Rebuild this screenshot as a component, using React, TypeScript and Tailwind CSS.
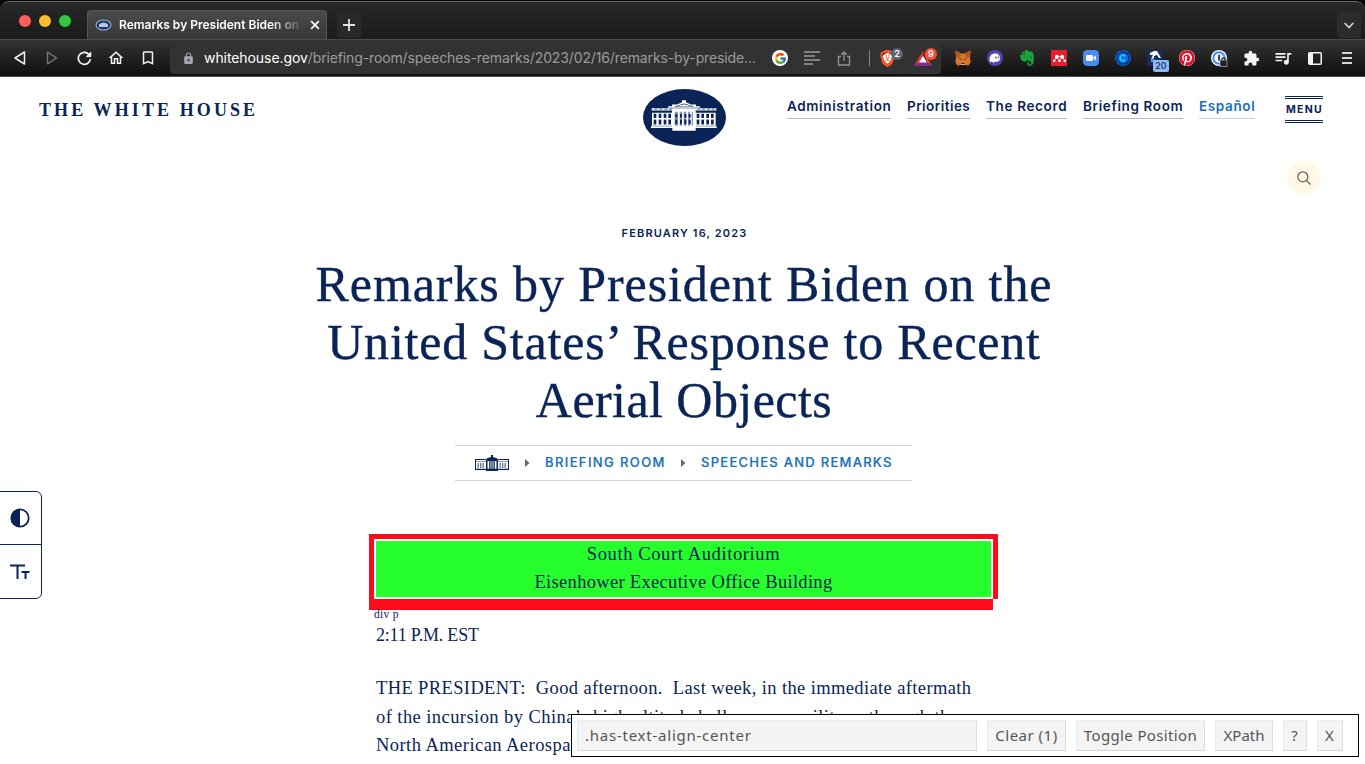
import React from "react";
import { FcGoogle } from "react-icons/fc";
import { SiBrave, SiEvernote, SiMendeley } from "react-icons/si";
import { FaPinterest } from "react-icons/fa";
import { MdExtension, MdQueueMusic, MdOutlineHome, MdBookmarkBorder, MdLock } from "react-icons/md";

function Building({ fg, bg, mid, className }: { fg: string; bg: string; mid: string; className: string }) {
  return (
    <svg viewBox="94 56 198 95" preserveAspectRatio="none" className={className} fill={fg}>
      <path d="M96 81h194v7H96z" />
      <path d="M145 80v-5h12v-5h15l15-7v-6h12v6l15 7h15v5h12v5z" />
      <path d="M163 77l31-10 31 10z" fill={bg} />
      <path d="M170 76l24-7 24 7z" />
      <path d="M97 95h191v40H97z" />
      {[102, 117, 132, 146, 231, 245, 260, 274].map((x) => (
        <g key={x} fill={bg}>
          <rect x={x} y="98" width="8" height="13" />
          <rect x={x} y="116" width="8" height="15" />
          <rect x={x + 2} y="83" width="9" height="2" />
        </g>
      ))}
      <path d="M157 86h71v53h-71z" />
      <path d="M165 92h55v46h-55z" fill={mid} />
      {[177, 189, 202, 213].map((x) => (
        <rect key={x} x={x - 2} y="90" width="5" height="50" />
      ))}
      {[167, 181, 194, 207].map((x) => (
        <g key={x} fill={bg}>
          <rect x={x} y="99" width="6" height="11" />
          <rect x={x} y="116" width="6" height="14" />
        </g>
      ))}
      <path d="M94 135h197v7H94zM158 140h70v10h-70z" />
      <path d="M96 138h60v1H96zM230 138h60v1h-60z" fill={bg} />
    </svg>
  );
}

function SmallBuilding() {
  return (
    <svg width="34" height="16" viewBox="0 0 34 16" fill="#0a2458">
      <path d="M0 4h11v1H0zM23 4h11v1H23zM0 4h1v11H0zM33 4h1v11h-1z" />
      <path d="M0 13.800h34V15H0zM11 14h12v2H11z" />
      <path d="M0 6.200h11v.8H0zM23 6.200h11v.8H23z" opacity=".6" />
      <path d="M11 5l1-1.700 4-1.300V0h2v2l4 1.300L23 5v10h-1.500V6h-9v9H11z" />
      <path d="M12 4h10v2H12z" />
      <path d="M14.200 6h1.300v9h-1.300zM16.400 6h1.200v9h-1.200zM18.500 6h1.300v9h-1.300z" />
      {[2.5, 5, 7.5, 24.5, 27, 29.5].map((x) => (
        <rect key={x} x={x} y="8" width="1.400" height="5" opacity=".6" />
      ))}
    </svg>
  );
}

function Cell({ children, className = "" }: { children: React.ReactNode; className?: string }) {
  return <div className={"relative flex h-8 w-8 shrink-0 items-center justify-center " + className}>{children}</div>;
}

function TabStrip() {
  return (
    <div className="h-[39px] bg-[#05050a] pt-px">
      <div className="flex h-[38px] items-end rounded-t-[9px] border-t border-[#68686a] bg-linear-to-b from-[#282828] to-[#1b1b1b] pl-[19px]">
        <div className="mb-[12px] flex gap-2">
          <span className="h-3 w-3 rounded-full bg-[#ff5f57]" />
          <span className="h-3 w-3 rounded-full bg-[#febc2e]" />
          <span className="h-3 w-3 rounded-full bg-[#30c840]" />
        </div>
        <div className="ml-[16px] flex h-[29px] w-[240px] items-center rounded-t border border-b-0 border-[#565656] bg-linear-to-b from-[#4b4b4b] to-[#373737] pl-[7px]">
          <svg width="17" height="12" viewBox="0 0 17 12">
            <ellipse cx="8.5" cy="6" rx="8" ry="5.5" fill="#a9b9d6" />
            <ellipse cx="8.5" cy="6" rx="7" ry="4.6" fill="#173a76" />
            <path d="M4 5l4.500-1.500L13 5v3H4z" fill="#b9c6dd" />
          </svg>
          <div className="ml-[7px] w-[181px] overflow-hidden font-['Inter',sans-serif] text-[12px] leading-[18px] font-semibold whitespace-nowrap text-white [mask-image:linear-gradient(to_right,black_150px,transparent_186px)]">
            Remarks by President Biden on
          </div>
          <svg width="10" height="10" viewBox="0 0 10 10" className="ml-[10px]" stroke="#fff" strokeWidth="1.700"><path d="M1.200 1.200l7.600 7.600M8.800 1.200L1.200 8.800" /></svg>
        </div>
        <div className="mb-px ml-[10px] flex h-[26px] w-[24px] items-center justify-center rounded bg-[#292929]">
          <svg width="12" height="12" viewBox="0 0 12 12" stroke="#e2e2e2" strokeWidth="1.800"><path d="M6 0v12M0 6h12" /></svg>
        </div>
        <div className="mr-[4px] mb-px ml-auto flex h-[26px] w-[24px] items-center justify-center rounded bg-[#2c2c2c]">
          <svg width="10" height="7" viewBox="0 0 10 7" fill="none" stroke="#d5d5d5" strokeWidth="1.700"><path d="M.7 1L5 5.500 9.300 1" /></svg>
        </div>
      </div>
    </div>
  );
}

function Toolbar() {
  return (
    <div className="flex h-[38px] items-center border-t border-b border-t-[#4c4c4c] border-b-[#504e4c] bg-linear-to-b from-[#343434] to-[#101010] pl-1">
      <Cell><svg width="12" height="14" viewBox="0 0 12 14" fill="none" stroke="#f2f2f2" strokeWidth="1.500" strokeLinejoin="round"><path d="M10.500 1v12L1 7z" /></svg></Cell>
      <Cell><svg width="12" height="14" viewBox="0 0 12 14" fill="none" stroke="#777" strokeWidth="1.400" strokeLinejoin="round"><path d="M1.500 1.200v11.600L10.500 7z" /></svg></Cell>
      <Cell><svg width="15" height="15" viewBox="0 0 15 15" fill="none" stroke="#f5f5f5" strokeWidth="1.700"><path d="M11.700 3.300A6 6 0 1 0 13.300 8" /><path d="M9.500 5.700L13.800 1v4.700z" fill="#f5f5f5" strokeWidth="1" /></svg></Cell>
      <Cell><MdOutlineHome size={18} color="#f2f2f2" /></Cell>
      <Cell><MdBookmarkBorder size={18} color="#f2f2f2" /></Cell>
      <div className="ml-[6px] flex h-[31px] w-[771px] items-center rounded-[4px] bg-[#323232] pl-[12px]">
        <MdLock size={13} color="#a4a6ad" />
        <div className="mb-[2px] ml-[9px] w-[560px] font-['Inter',sans-serif] text-[14px] whitespace-nowrap text-[#9b9b9b]">
          <span className="tracking-[-0.076px] text-white">whitehouse.gov</span>
          <span className="tracking-[-0.131px]">/briefing-room/speeches-remarks/2023/02/16/remarks-by-preside...</span>
        </div>
        <Cell>
          <span className="flex h-4 w-4 items-center justify-center rounded-full bg-white"><FcGoogle size={13} /></span>
        </Cell>
        <Cell><svg width="16" height="14" viewBox="0 0 16 14" stroke="#9a9a9a" strokeWidth="1.500"><path d="M0 1h16M0 5h11M0 9h16M0 13h9" /></svg></Cell>
        <Cell><svg width="14" height="15" viewBox="0 0 14 15" fill="none" stroke="#929292" strokeWidth="1.300"><path d="M4 5.500H1.500v8.500h11V5.500H10M7 10V1.300M4.200 3.800L7 1l2.800 2.800" /></svg></Cell>
        <span className="ml-[9px] h-4 w-px bg-[#858585]" />
        <Cell className="ml-[3px]">
          <span className="mr-[3px] flex h-[17px] w-[17px] items-center justify-center bg-[radial-gradient(circle,white_5px,transparent_5.5px)]"><SiBrave size={17} color="#fb542b" /></span>
          <span className="absolute top-[6px] left-[18px] flex h-3 w-3 items-center justify-center rounded-full bg-[#5d6472] font-['Inter',sans-serif] text-[9px] font-semibold text-white">2</span>
        </Cell>
        <Cell className="ml-[2px]">
          <svg width="18" height="15" viewBox="0 0 18 15"><path d="M9 0L0 15l9-4.500z" fill="#e8343e" /><path d="M9 0l9 15-5-4z" fill="#ff4724" /><path d="M0 15h18l-5-4H5z" fill="#7b2f91" /><path d="M9 5l4 6.500H5z" fill="#fff" /></svg>
          <span className="absolute top-[6px] left-[18px] flex h-3 w-3 items-center justify-center rounded-full bg-[#ff4b37] font-['Inter',sans-serif] text-[9px] font-semibold text-white">9</span>
        </Cell>
      </div>
      <Cell className="ml-[6px]">
        <svg width="16" height="16" viewBox="0 0 16 16"><path d="M.5.5L6 3.500h4L15.500.5 15 8l.7 4-2 3.500L10 15H6l-3.700.5-2-3.500L1 8z" fill="#d9752b" /><path d="M.5.5L6 3.500 5 8 1 7zM15.500.5L10 3.500l1 4.500 4-1z" fill="#b8581d" /><path d="M3.500 8.500L6.500 8.800 6.800 10zM12.500 8.500l-3 .3L9.200 10z" fill="#33251f" /><path d="M6 15l.5-1.800h3L10 15z" fill="#c6b6a6" /><path d="M6.500 13h3v1h-3z" fill="#27201d" /></svg>
      </Cell>
      <Cell>
        <svg width="16" height="16" viewBox="0 0 16 16"><circle cx="8" cy="8" r="8" fill="#5144b8" /><path d="M2.500 10C2.500 5.500 5 3.500 8 3.500s5 2 5 4.700c0 2-.8 2.800-1.800 2.800-.8 1.200-2 1.200-2.800.3-1 1.700-2.900 1.500-3.400.3-1 .9-2.500.4-2.500-1.600z" fill="#fff" /><path d="M8.200 6.500h1.200v2H8.200zM10.600 6.500h1.200v2h-1.200z" fill="#5144b8" /></svg>
      </Cell>
      <Cell><SiEvernote size={16} color="#19a33a" /></Cell>
      <Cell><span className="flex h-4 w-4 items-center justify-center bg-[#e81f31]"><SiMendeley size={13} color="#fff" /></span></Cell>
      <Cell><svg width="16" height="16" viewBox="0 0 16 16"><rect width="16" height="16" rx="4.500" fill="#4a8cf6" /><rect x="3" y="5" width="7" height="6" rx="1.300" fill="#fff" /><path d="M10.500 7.300L13 5.500v5l-2.500-1.800z" fill="#fff" /></svg></Cell>
      <Cell><svg width="16" height="16" viewBox="0 0 16 16" fill="none"><circle cx="8" cy="8" r="7.200" fill="#0b1930" stroke="#0966e4" strokeWidth="1.500" strokeDasharray="6 .6" /><circle cx="8" cy="8" r="5.500" fill="#0b69ec" /><path d="M10.300 6.500A2.800 2.800 0 1 0 10.300 9.500" stroke="#19d4fa" strokeWidth="1.600" /></svg></Cell>
      <Cell>
        <svg width="16" height="16" viewBox="0 0 16 16"><path d="M0 0h16v16H0z" fill="#1a2b55" /><path d="M3 3L7 1h3l4 7h-2L10 5 7 6v2L4 9l2-4H3z" fill="#fff" /><path d="M4 9l3-1 1 4H4z" fill="#4a9ce0" /></svg>
        <span className="absolute top-[18px] left-[14px] flex h-3 w-4 items-center justify-center rounded-[2px] bg-[#8cb8f8] font-['Inter',sans-serif] text-[9px] font-medium text-[#172b4d]">20</span>
      </Cell>
      <Cell><span className="rounded-full bg-white"><FaPinterest size={16} color="#e11027" /></span></Cell>
      <Cell>
        <svg width="17" height="17" viewBox="0 0 17 17"><circle cx="8" cy="8" r="8" fill="#f5f8fc" /><circle cx="8" cy="8" r="5.700" fill="none" stroke="#3b8ee8" strokeWidth="1.900" /><path d="M7.100 4.800h2v6h-2z" fill="#223e66" /><path d="M9 10h7v6.500H9z" fill="#222" stroke="#eee" strokeWidth=".5" /><path d="M10.800 10V8.800q1.700-2 3.400 0V10" fill="none" stroke="#222" strokeWidth="1.200" /></svg>
      </Cell>
      <Cell><MdExtension size={17} color="#f3f3f3" /></Cell>
      <Cell><MdQueueMusic size={20} color="#f3f3f3" /></Cell>
      <Cell><svg width="14" height="13" viewBox="0 0 14 13"><rect x=".75" y=".75" width="12.500" height="11.500" rx="1" fill="none" stroke="#f3f3f3" strokeWidth="1.500" /><path d="M1 1h4v11H1z" fill="#f3f3f3" /></svg></Cell>
      <Cell><svg width="10" height="12" viewBox="0 0 10 12" stroke="#d7d7d7" strokeWidth="2"><path d="M0 1h10M0 6h10M0 11h10" /></svg></Cell>
    </div>
  );
}

function NavLink({ children, className }: { children: React.ReactNode; className: string }) {
  return <a className={"flex h-[24px] items-start border-b font-['Inter',sans-serif] text-[13.5px] leading-[22px] font-semibold whitespace-nowrap " + className}>{children}</a>;
}

function Arrow() {
  return <svg width="5" height="8" viewBox="0 0 5 8" fill="#7d6259"><path d="M0 0l4.500 4L0 8z" /></svg>;
}

function SelectorButton({ children, className }: { children: React.ReactNode; className: string }) {
  return <div className={"flex h-[31px] items-center justify-center border border-t-[#ececec] border-r-[#ddd] border-b-[#d8d8d8] border-l-[#ececec] bg-[#f4f4f4] whitespace-nowrap " + className}>{children}</div>;
}

export default function App() {
  return (
    <div className="relative flex h-[764px] w-[1365px] flex-col overflow-hidden bg-white text-[#0a2458]">
      <TabStrip />
      <Toolbar />
      <header className="flex h-[84px] items-start pl-[39px]">
        <div className="mt-[22px] w-[603.5px] font-['Liberation_Serif',serif] text-[18px] leading-[22px] font-bold tracking-[3.1px] whitespace-nowrap">THE WHITE HOUSE</div>
        <div className="mt-[11.500px] flex h-[57px] w-[83px] items-center justify-center rounded-[50%] bg-[#0a2458]">
          <Building fg="#fff" bg="#0a2458" mid="#8a97b5" className="mb-[4px] h-[31px] w-[66px]" />
        </div>
        <nav className="mt-[18px] ml-[61.5px] flex gap-4">
          <NavLink className="w-[104px] border-[#b7bccd] tracking-[0.64px]">Administration</NavLink>
          <NavLink className="w-[63px] border-[#b7bccd] tracking-[0.45px]">Priorities</NavLink>
          <NavLink className="w-[81px] border-[#b7bccd] tracking-[0.65px]">The Record</NavLink>
          <NavLink className="w-[100px] border-[#b7bccd] tracking-[0.63px]">Briefing Room</NavLink>
          <NavLink className="w-[56px] border-[#bcd6ee] tracking-[0.63px] text-[#1770c0]">Español</NavLink>
        </nav>
        <div className="mt-[19px] ml-[30px] flex h-[27px] w-[38px] items-center justify-center border-y-3 border-double border-[#0a2458] pl-px font-['Inter',sans-serif] text-[10.5px] font-bold tracking-[1.3px]">MENU</div>
      </header>
      <div className="flex h-[34px] justify-end pr-[44px]">
        <button className="flex h-[34px] w-[34px] items-center justify-center rounded-full bg-[#fffae8]">
          <svg width="14" height="14" viewBox="0 0 14 14" fill="none" stroke="#7d5a4e" strokeWidth="1.300"><circle cx="5.800" cy="5.800" r="5" /><path d="M9.500 9.500l4 4" /></svg>
        </button>
      </div>
      <main className="flex flex-col items-center pl-[3px]">
        <p className="mt-[30px] h-4 pl-px font-['Inter',sans-serif] text-[11px] leading-4 font-semibold tracking-[1.15px]">FEBRUARY 16, 2023</p>
        <h1 className="mt-[14px] flex flex-col items-center font-['Liberation_Serif',serif] text-[50px] leading-[58px] whitespace-nowrap [-webkit-text-stroke:0.4px_currentColor]">
          <span className="tracking-[0.91px]">Remarks by President Biden on the</span>
          <span className="tracking-[0.78px]">United States’ Response to Recent</span>
          <span className="tracking-[0.44px]">Aerial Objects</span>
        </h1>
        <div className="mt-[16px] mr-[2px] flex h-[36px] w-[457px] items-center border-y border-[#d5d6e0] pl-[20px] font-['Inter',sans-serif] text-[13px] font-medium whitespace-nowrap text-[#1770c0]">
          <SmallBuilding />
          <span className="ml-[16px]"><Arrow /></span>
          <span className="ml-[15.5px] w-[135.5px] tracking-[1.38px] [-webkit-text-stroke:0.2px_currentColor]">BRIEFING ROOM</span>
          <Arrow />
          <span className="ml-[15.5px] tracking-[1.27px] [-webkit-text-stroke:0.2px_currentColor]">SPEECHES AND REMARKS</span>
        </div>
      </main>
      <article className="mt-[53px] pl-[369px] font-['Liberation_Serif',serif] text-[18.5px] whitespace-nowrap">
        <div className="w-[629px] border-5 border-b-0 border-[#ff0b1b]">
          <div className="flex h-[60px] flex-col items-center border-2 border-white bg-[#27ff2c] text-center leading-[28px]">
            <span className="-mt-px tracking-[0.61px]">South Court Auditorium</span>
            <span className="tracking-[0.31px]">Eisenhower Executive Office Building</span>
          </div>
        </div>
        <div className="h-[11px] w-[624px] bg-[#ff0b1b]" />
        <div className="h-[11px] pl-[5px] text-[11.5px] leading-[9px] tracking-[0.3px]">div p</div>
        <p className="h-[28px] pl-[7px] text-[18px] leading-[28px] tracking-[-0.2px]">2:11 P.M. EST</p>
        <div className="mt-[25px] flex flex-col items-start pl-[7px] leading-[28.500px]">
          <span className="tracking-[0.38px] whitespace-pre">THE PRESIDENT:  Good afternoon.  Last week, in the immediate aftermath</span>
          <span className="tracking-[0.43px]">of the incursion by China’s high-altitude balloon, our military, through the</span>
          <span className="tracking-[0.45px]">North American Aerospace</span>
        </div>
      </article>
      <aside className="absolute top-[491px] left-[-1px] flex h-[108px] w-[43px] flex-col rounded-r-[6px] border border-[#0a2458] bg-white">
        <div className="flex h-[53px] items-center border-b border-[#0a2458] pl-[9.5px]">
          <svg width="20" height="20" viewBox="0 0 20 20"><circle cx="10" cy="10" r="8.700" fill="none" stroke="#0a2458" strokeWidth="1.800" /><path d="M10 1a9 9 0 0 0 0 18z" fill="#0a2458" /></svg>
        </div>
        <div className="flex h-[53px] items-center pl-[10px]">
          <svg width="20" height="16" viewBox="0 0 20 16" fill="none" stroke="#0a2458" strokeWidth="2"><path d="M0 1.500h15M7.500 1.500V15M11.500 8h8M15.500 8v7" /></svg>
        </div>
      </aside>
      <div className="absolute top-[714px] left-[571px] flex h-[43px] w-[788px] gap-[10px] border border-black bg-white p-[5px] font-['Noto_Sans',sans-serif] text-[15px] text-[#555]">
        <div className="flex h-[31px] w-[400px] items-center border border-t-[#ececec] border-r-[#ddd] border-b-[#d8d8d8] border-l-[#ececec] bg-[#f4f4f4] pl-[7px] tracking-[0.76px]">.has-text-align-center</div>
        <SelectorButton className="w-[79px] tracking-[0.5px]">Clear (1)</SelectorButton>
        <SelectorButton className="w-[129px] tracking-[0.36px]">Toggle Position</SelectorButton>
        <SelectorButton className="w-[58px]">XPath</SelectorButton>
        <SelectorButton className="w-[24px] pr-px">?</SelectorButton>
        <SelectorButton className="w-[26px] pr-px">X</SelectorButton>
      </div>
    </div>
  );
}
